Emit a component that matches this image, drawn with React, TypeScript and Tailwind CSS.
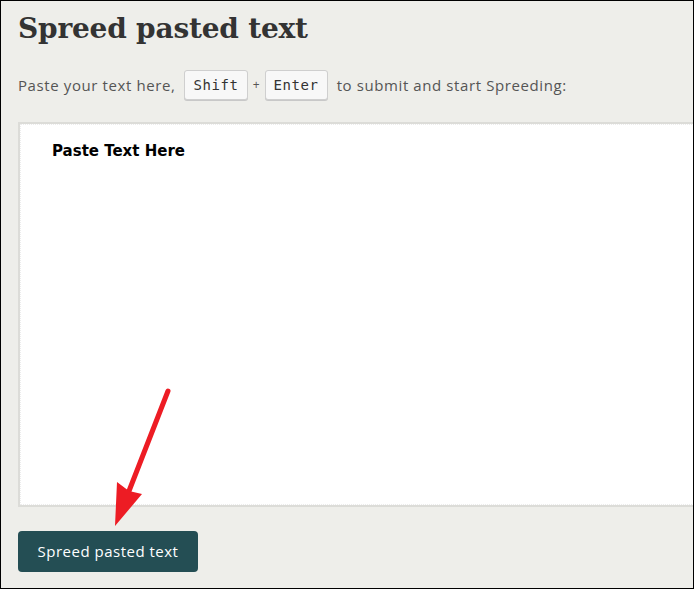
import React from 'react';

const Key: React.FC<{ label: string }> = ({ label }) => (
  <kbd className="inline-flex items-center h-[30px] px-[8px] rounded-[3px] border border-[#cfcfcf] bg-[#f8f8f8] shadow-[0_1px_0_#c8c8c8] text-[#333] text-[14px] font-['DejaVu_Sans_Mono',monospace]">
    {label}
  </kbd>
);

const Arrow = () => (
  <svg className="absolute left-0 top-0 pointer-events-none" width="694" height="589" viewBox="0 0 694 589">
    <line x1="167" y1="390" x2="128" y2="490" stroke="#ed1c24" strokeWidth="5" strokeLinecap="round" />
    <polygon points="114,525 116,481 128,490 141,493" fill="#ed1c24" />
  </svg>
);

export default function App() {
  return (
    <div className="relative w-[694px] h-[589px] overflow-hidden bg-[#eeeeea] border border-black">
      <div className="flex flex-col pl-[17px]">
        <h1 className="mt-[8px] text-[28px] leading-[40px] font-bold text-[#333] font-['DejaVu_Serif',serif] tracking-[-0.2px]">
          Spreed pasted text
        </h1>

        <p className="mt-[21px] flex items-center gap-[5px] text-[15px] text-[#555] font-['Open_Sans',sans-serif] tracking-[0.6px]">
          <span className="mr-[4px]">Paste your text here,</span>
          <Key label="Shift" />
          <span className="text-[12px] tracking-normal">+</span>
          <Key label="Enter" />
          <span className="ml-[4px]">to submit and start Spreeding:</span>
        </p>

        <div className="mt-[22px] h-[385px] w-[700px] bg-white border-2 border-[#dcdcd8]">
          <div className="h-full border border-dotted border-[#ececec] pl-[31px] pt-[13px]">
            <span className="text-[15px] font-bold text-black font-['DejaVu_Sans',sans-serif]">Paste Text Here</span>
          </div>
        </div>

        <div className="mt-[24px]">
          <button className="h-[41px] w-[180px] rounded-[4px] bg-[#244e54] text-white text-[15px] font-['Open_Sans',sans-serif] tracking-[0.5px]">
            Spreed pasted text
          </button>
        </div>
      </div>
      <Arrow />
    </div>
  );
}
